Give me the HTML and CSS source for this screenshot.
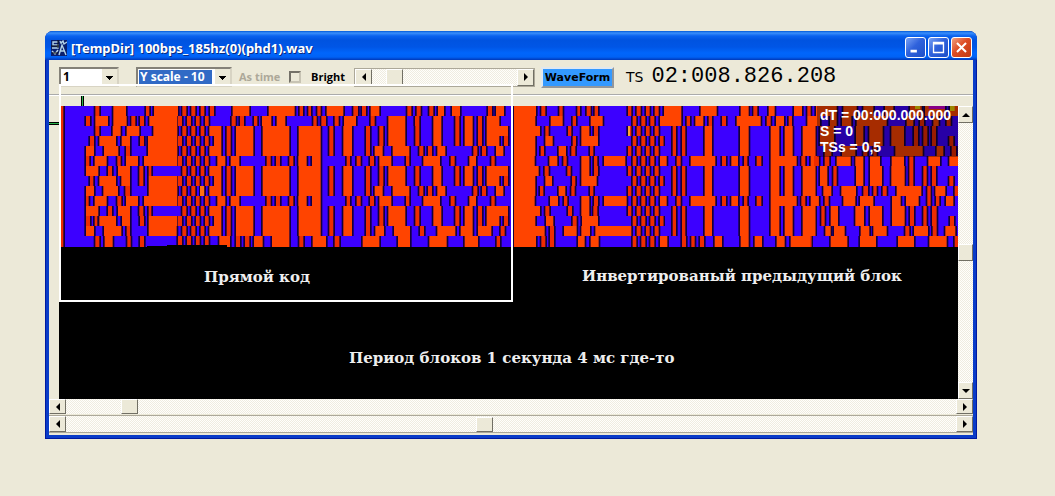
FILE: index.html
```html
<!DOCTYPE html>
<html lang="ru">
<head>
<meta charset="utf-8">
<title>[TempDir] 100bps_185hz(0)(phd1).wav</title>
<link rel="stylesheet" href="styles.css">
</head>
<body>
<main class="window">
  <header class="titlebar">
    <svg class="app-icon" viewBox="0 0 16 16" aria-hidden="true">
      <rect width="16" height="16" fill="#0a1f6e"/>
      <path d="M7 2H2v3h5v3H1M8 15l3-10 4 10M9 11h5M9 1l1 2 2-2 1 3 3-2M1 11l3 3 3-4" fill="none" stroke="#b5d4e8" stroke-width="1.4"/>
      <path d="M0 6h8M7 0v8M1 13h6" stroke="#111" stroke-width="1"/>
    </svg>
    <h1 class="title">[TempDir] 100bps_185hz(0)(phd1).wav</h1>
    <button class="winbtn" aria-label="Minimize"><svg viewBox="0 0 21 21"><rect x="5" y="13" width="7" height="3" fill="#fff"/></svg></button>
    <button class="winbtn" aria-label="Maximize"><svg viewBox="0 0 21 21"><path d="M5 5h11v11H5zM5 6.500h11" fill="none" stroke="#fff" stroke-width="1.500"/></svg></button>
    <button class="winbtn winbtn-close" aria-label="Close"><svg viewBox="0 0 21 21"><path d="M5.500 5.500l10 10M15.500 5.500l-10 10" stroke="#fff" stroke-width="2.300"/></svg></button>
  </header>
  <div class="client">
    <div class="toolbar">
      <select class="combo combo-num" aria-label="Channel"><option>1</option></select>
      <select class="combo combo-scale" aria-label="Y scale"><option>Y scale - 10</option></select>
      <label class="astime" for="astime">As time</label>
      <input class="check" type="checkbox" id="astime" disabled>
      <label class="bright" for="bright">Bright</label>
      <div class="scroll scroll-bright">
        <button class="arrow" aria-label="Darker"><svg viewBox="0 0 8 8"><path d="M6 0v8L2 4z"/></svg></button>
        <input class="range" id="bright" type="range" min="0" max="100" value="11">
        <button class="arrow" aria-label="Brighter"><svg viewBox="0 0 8 8"><path d="M2 0v8l4-4z"/></svg></button>
      </div>
      <button class="waveform">WaveForm</button>
      <span class="ts">TS</span>
      <output class="clock">02:008.826.208</output>
    </div>
    <div class="ruler"><span class="mark-x"></span></div>
    <div class="viewer">
      <div class="side"><span class="mark-y"></span></div>
      <div class="stage">
        <svg class="fall" id="fall" viewBox="0 0 2697 141" preserveAspectRatio="none" role="img" aria-label="Phase waterfall"></svg>
        <div class="info">
          <div>dT = 00:000.000.000</div>
          <div>S = 0</div>
          <div>TSs = 0,5</div>
        </div>
        <div class="frame"></div>
        <p class="note note-direct">Прямой код</p>
        <p class="note note-inverse">Инвертированый предыдущий блок</p>
        <p class="note note-period">Период блоков 1 секунда 4 мс где-то</p>
      </div>
      <div class="scroll scroll-v">
        <button class="arrow" aria-label="Up"><svg viewBox="0 0 8 8"><path d="M0 6h8L4 2z"/></svg></button>
        <input class="range range-v" type="range" min="0" max="100" value="50" aria-label="Vertical position">
        <button class="arrow" aria-label="Down"><svg viewBox="0 0 8 8"><path d="M0 2h8L4 6z"/></svg></button>
      </div>
    </div>
    <div class="scroll scroll-h">
      <button class="arrow" aria-label="Left"><svg viewBox="0 0 8 8"><path d="M6 0v8L2 4z"/></svg></button>
      <input class="range" type="range" min="0" max="1000" value="63" aria-label="Horizontal position">
      <button class="arrow" aria-label="Right"><svg viewBox="0 0 8 8"><path d="M2 0v8l4-4z"/></svg></button>
    </div>
    <div class="scroll scroll-h scroll-file">
      <button class="arrow" aria-label="File back"><svg viewBox="0 0 8 8"><path d="M6 0v8L2 4z"/></svg></button>
      <input class="range" type="range" min="0" max="1000" value="470" aria-label="File position">
      <button class="arrow" aria-label="File forward"><svg viewBox="0 0 8 8"><path d="M2 0v8l4-4z"/></svg></button>
    </div>
  </div>
</main>
<script src="waterfall.js"></script>
</body>
</html>
```
FILE: styles.css
```css
* { box-sizing: border-box; }
body {
  margin: 0;
  padding: 31px 78px 57px 45px;
  background: #ece9d8;
  font-family: "Liberation Sans", Arial, sans-serif;
  color: #000;
}
button { padding: 0; font: inherit; }
.window {
  background: #0a3cc8;
  border: 1px solid #0019a0;
  border-top: 0;
  border-radius: 8px 8px 0 0;
  padding: 0 3px 3px;
}
.titlebar {
  display: flex;
  align-items: center;
  gap: 2px;
  height: 29px;
  margin: 0 -4px;
  padding: 4px 5px 0 6px;
  border-radius: 8px 8px 0 0;
  background: linear-gradient(#0058d8 0, #3a8ffb 2px, #0a62ee 5px, #0053e0 9px, #0056e6 16px, #0066fc 22px, #0062f6 26px, #0038b8 29px);
}
.app-icon { width: 16px; height: 16px; }
.title {
  flex: 1;
  margin: 0 0 0 2px;
  font: bold 13px/18px "Noto Sans", sans-serif;
  color: #fff;
  text-shadow: 1px 1px 0 #0a2a80;
}
.winbtn {
  width: 21px;
  height: 21px;
  border: 1px solid #fff;
  border-radius: 3px;
  background: linear-gradient(135deg, #7aa2f4, #2f62dc 45%, #1d4fc8);
}
.winbtn svg { display: block; width: 100%; }
.winbtn-close { background: linear-gradient(135deg, #f0a080, #dd4c24 45%, #c03a12); }
.client { background: #ece9d8; padding-bottom: 2px; }
.toolbar {
  display: flex;
  align-items: center;
  height: 36px;
  padding-left: 10px;
  border-bottom: 2px groove #fff;
  overflow: hidden;
}
.combo {
  height: 20px;
  border: 2px inset #d8d4c4;
  border-radius: 0;
  appearance: none;
  font: bold 12px/16px "Noto Sans", sans-serif;
  color: #000;
  padding: 0 2px;
  background-color: #fff;
  background-image: linear-gradient(#000, #000), linear-gradient(#000, #000), linear-gradient(#000, #000), linear-gradient(#000, #000), linear-gradient(#ece9d8, #ece9d8);
  background-repeat: no-repeat;
  background-size: 7px 1px, 5px 1px, 3px 1px, 1px 1px, 15px 16px;
  background-position: right 4px top 7px, right 5px top 8px, right 6px top 9px, right 7px top 10px, right top;
}
.combo-num { width: 60px; margin-right: 17px; }
.combo-scale {
  width: 96px;
  margin-right: 7px;
  color: #fff;
  background-image: linear-gradient(#000, #000), linear-gradient(#000, #000), linear-gradient(#000, #000), linear-gradient(#000, #000), linear-gradient(#ece9d8, #ece9d8), linear-gradient(#316ac5, #316ac5);
  background-size: 7px 1px, 5px 1px, 3px 1px, 1px 1px, 15px 16px, 73px 14px;
  background-position: right 4px top 7px, right 5px top 8px, right 6px top 9px, right 7px top 10px, right top, 1px 1px;
}
.astime, .bright { font: bold 11px/14px "Open Sans", sans-serif; }
.astime { width: 50px; color: #aca899; white-space: nowrap; }
.check {
  appearance: none;
  width: 12px;
  height: 12px;
  margin: 0 10px 0 0;
  border: 2px inset #c8c4b4;
  background: #ece9d8;
}
.bright { width: 43px; }
.scroll {
  display: flex;
  background: repeating-conic-gradient(#fffefb 0 25%, #efece0 0 50%) 0 0 / 2px 2px;
}
.scroll-bright {
  width: 181px;
  height: 19px;
  border: 1px solid #aca899;
  margin-right: 6px;
}
.arrow {
  flex: none;
  width: 17px;
  min-height: 15px;
  display: grid;
  place-items: center;
  background: #ece9d8;
  border: 1px solid;
  border-color: #fff #716f64 #716f64 #fff;
}
.arrow svg { width: 8px; height: 8px; display: block; }
.range {
  flex: 1;
  min-width: 0;
  margin: 0;
  appearance: none;
  background: none;
}
.range::-webkit-slider-thumb {
  appearance: none;
  width: 17px;
  height: 15px;
  background: #ece9d8;
  border: 1px solid;
  border-color: #fff #716f64 #716f64 #fff;
}
.scroll-bright .range::-webkit-slider-thumb { height: 17px; }
.waveform {
  width: 73px;
  height: 21px;
  border: 2px outset #e0e8f0;
  background: #3399ff;
  font: bold 11px/15px "DejaVu Sans", sans-serif;
}
.ts { margin: 0 8px 0 12px; font: 14px/18px "DejaVu Sans", sans-serif; }
.clock { font: 22px/24px "Liberation Mono", monospace; }
.ruler { height: 10px; padding-left: 32px; }
.mark-x, .mark-y { display: block; background: #28b048; border: 1px solid #000; }
.mark-x { width: 3px; height: 10px; border-width: 0 1px; }
.viewer { display: flex; height: 293px; }
.side { width: 10px; padding-top: 16px; }
.mark-y { height: 3px; border-width: 1px 0; }
.stage { flex: 1; position: relative; background: #000; min-width: 0; }
.fall { display: block; width: 100%; height: 141px; background: #ece9d8; }
.info {
  position: absolute;
  top: 0;
  right: 0;
  width: 141px;
  height: 51px;
  padding: 1px 0 0 3px;
  background: rgba(0, 0, 0, 0.35);
  color: #fff;
  font: bold 14px/16px "Liberation Sans", sans-serif;
  white-space: nowrap;
}
.frame {
  position: absolute;
  left: 0;
  top: -22px;
  width: 454px;
  height: 218px;
  border: 2px solid #fff;
}
.note {
  position: absolute;
  margin: 0;
  color: #eee;
  font: bold 15px/20px "DejaVu Serif", serif;
  white-space: nowrap;
}
.note-direct { left: 145px; top: 161px; }
.note-inverse { left: 523px; top: 160px; }
.note-period { left: 290px; top: 242px; }
.scroll-v { flex-direction: column; width: 15px; }
.scroll-v .arrow { width: 15px; height: 17px; }
.range-v { writing-mode: vertical-lr; width: 15px; min-height: 0; }
.range-v::-webkit-slider-thumb { width: 15px; height: 17px; }
.scroll-h { height: 15px; }
.scroll-file {
  height: 18px;
  margin-top: 1px;
  border-top: 1px solid #aca899;
  border-bottom: 1px solid #aca899;
}
```
FILE: waterfall.js
```js
// Waterfall blocks: for each strip, red runs on blue, three units per screen pixel.
const oddCells = '384-396 411-423 438-449 465-476';
const evenCells = '397-409 424-436 452-463 480-492';
const c2 = '48-60 88-100 115-166 196-208 250-274 316-328 344-368 384-396 410-474';
const c3 = '48-60 88-100 115-166 196-208 250-274 316-328 344-368 384-396 410-448 462-474';
const c4 = '48-60 74-98 128-178 208-220 234-246 262-286 370-382 396-408 438-460';
const c5 = '20-32 60-72 88-124 168-178 220-270 302-314 358-378 424-434';
const b2 = '28-64 80-92 108-160 188-268 296-362 388-400 430-456';
const b3 = '42-64 80-92 108-160 188-268 296-362 388-400 430-456';
const b5 = '52-76 92-118 200-212 228-240 268-280 295-320 336-362 440-450';
const e2 = '38-48 66-76 134-156 240-266 332-358 374-398 428-466';
const e3 = '0-10 ' + e2;
const e5 = '0-20 50-62 92-166 186-198 214-234 252-262 290-304 332-410 424-436 452-476';
const dOdd = ' 368-379 394-406 421-433';
const dEven = ' 354-364 380-392 408-419 434-446';

const strips = [
  { x: -27, rows: [
    '33-40 136-148 190-228 288-298 312-384',
    '33-40 108-120 136-174 190-230 244-256 270-282 298-382',
    '33-40 136-148 188-212 230-268 310-382',
    '33-40 120-132 148-198 215-240 270-282 294-382',
    '33-40 108-132 162-205 228-240 294-382',
    '33-40 108-118 134-170 202-212 228-264 282-382',
    '33-40 108-145 174-186 204-240 268-280 296-304',
    '33-40 120-130 148-198 214-240 268-280 296-382',
    '33-40 108-132 160-204 226-240 296-382',
    '33-40 108-116 134-170 202-214 228-264 282-382',
    '33-40 108-145 174-186 204-240 268-280 296-304',
    '33-40 108-120 134-142 148-198 216-240 270-282 296-382',
    '33-40 108-132 162-214 230-240 296-380',
    '33-40 136-148 164-188 232-242 270-282'
  ].map((r, i) => r + ' ' + (i % 2 ? oddCells : evenCells)) },
  { x: 423, rows: [
    '98-148 206-284 299-309 325-333 352-362 380-430 460-474',
    '95-107 120-132 162-172 186-214 230-256 340-350 364-378 404-416 432-450',
    b2, b3, b2, b5, b2, b3, b2, b5, b2, b3, b2,
    '58-90 108-120 135-148 162-188 216-268 298-310 338-378 404-418'] },
  { x: 873, rows: [
    '36-48 62-88 172-184 200-212 238-250 264-282 306-330 414-426 438-462',
    '0-18 62-74 115-166 195-208 250-274 316-328 344-368 384-396 410-448',
    c2, c3, c4, c5, c2, c3, c4, c5, c2, c3,
    '48-60 76-102 132-180 210-222 262-316 332-368 384-424 452-464',
    '38-88 144-180 238-290 344-384 440-450'] },
  { x: 1353, rows: [
    '12-78 94-106 148-158 202-210 230-242 254-264 464-474' + dEven,
    '12-76 122-158 188-198 242-278' + dOdd,
    '12-90 106-116 174-184 214-238 252-264' + dEven,
    '12-76 106-128 188-198 214-264 450-460' + dOdd,
    '12-76 92-102 146-168 184-196 240-250' + dEven,
    '12-74 118-142 160-170 214-238 252-262 282-346' + dOdd,
    '12-86 104-116 172-182 214-238 252-264' + dEven,
    '12-76 106-126 186-196 214-260 450-458' + dOdd,
    '12-76 90-100 146-166 184-194 240-250' + dEven,
    '12-74 120-144 162-172 214-238 252-264 282-350' + dOdd,
    '12-90 106-118 174-186 214-238 250-262' + dEven,
    '12-76 108-130 188-200 216-264 450-460' + dOdd,
    '12-104 120-132 162-200 214-240 256-364 380-392 408-419 434-446',
    '12-78 94-106 120-132 204-224 242-266' + dOdd] },
  { x: 1803, rows: [
    '12-64 122-170 242-266 280-292 326-344 402-426 442-452',
    '0-64 80-90 106-130 146-156 186-198 230-302 320-332 348-372 386-396 442-464',
    e2, e3, e2, e5, e2, e3, e2, e5, e2, e3, e2,
    '0-22 66-78 94-104 120-132 164-186 242-266 284-306 350-374 392-454'] },
  { x: 2253, rows: [
    '18-80 100-140 160-190 225-250 300-335 345-405 420-444',
    '0-30 60-80 96-124 140-230 290-310 330-342 370-386 410-422',
    '0-16 30-72 138-160 178-218 244-282 312-324 340-352 366-378',
    '0-16 30-72 138-160 178-218 244-282 312-324 340-352 366-378 418-430',
    '0-16 44-64 96-136 160-172 190-200 256-338 380-400 425-438',
    '12-26 44-58 80-122 136-160 180-210 245-282 298-310 355-390 418-444',
    '0-16 30-52 70-80 138-160 180-216 244-284 298-310 340-350 366-378',
    '0-16 30-52 70-80 138-160 180-216 244-284 298-310 340-350 366-378 418-430',
    '0-16 40-64 94-138 160-174 190-200 218-230 260-334 352-362 376-406 434-444',
    '4-26 44-56 100-136 150-190 246-272 288-326 352-362 378-388 408-430',
    '0-16 34-44 62-84 136-162 180-216 246-284 300-312 340-350 366-380',
    '0-16 34-44 62-84 136-162 180-216 246-284 300-312 340-350 366-380 420-432',
    '0-16 46-62 72-104 152-178 190-230 286-298 312-354 368-380 406-436',
    '0-4 62-112 150-198 264-312 358-410 434-444'] }
];

const svg = document.getElementById('fall');
const box = (x, y, w, h, fill) => {
  const r = document.createElementNS('http://www.w3.org/2000/svg', 'rect');
  Object.entries({ x, y, width: w, height: h, fill }).forEach(([k, v]) => r.setAttribute(k, v));
  svg.appendChild(r);
};
const eachRun = draw => strips.forEach(strip => strip.rows.forEach((row, i) => {
  row.split(' ').forEach(run => {
    const [a, b] = run.split('-').map(Number);
    draw(strip.x + a, i * 10, b - a, i === 13 ? 11 : 10);
  });
}));

box(6, 0, 2691, 141, '#3c00ff');
eachRun((x, y, w, h) => box(x - 5, y, w + 10, h, '#14003c'));
eachRun((x, y, w, h) => box(x, y, w, h, w < 16 ? '#ee2c00' : '#ff4400'));
box(0, 0, 6, 141, '#ece9d8');

box(1707, 20, 6, 10, '#ffa030');
box(423, 80, 12, 10, '#ff7010');
box(2568, 0, 15, 3, '#f0d000');
box(2609, 0, 49, 3, '#d000d0');
box(2673, 0, 14, 5, '#f0d000');
box(264, 140, 60, 1, '#000');
box(324, 139, 180, 2, '#000');
```
